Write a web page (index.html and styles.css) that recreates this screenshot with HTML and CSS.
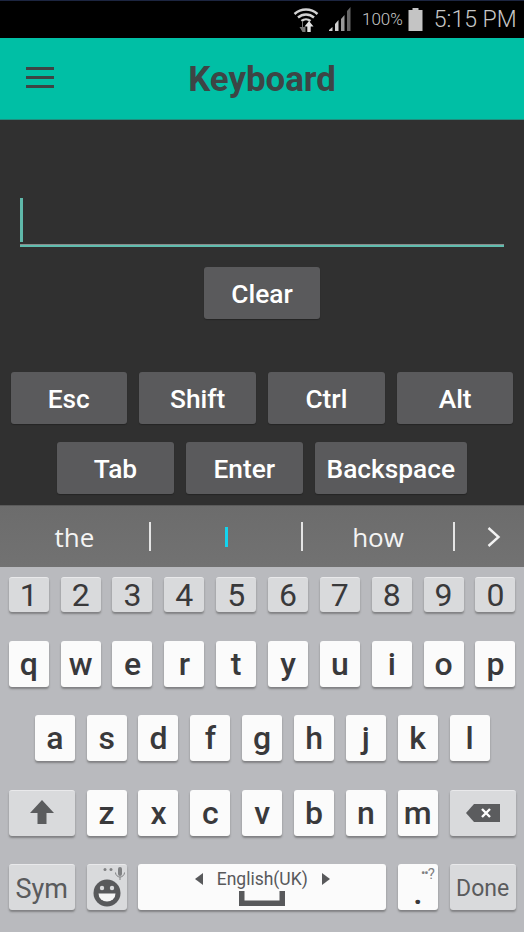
FILE: index.html
```html
<!DOCTYPE html>
<html lang="en">
<head>
<meta charset="utf-8">
<title>Keyboard</title>
<link rel="stylesheet" href="styles.css">
</head>
<body>
<div class="screen">
  <header class="status">
    <svg class="ic-wifi" width="26" height="26" viewBox="0 0 26 26">
      <path d="M1.500 8 A17 17 0 0 1 24.500 8 M5 11.500 A12 12 0 0 1 21 11.500 M8.500 15 A7 7 0 0 1 17.500 15" fill="none" stroke="#d2d2d2" stroke-width="2.400"/>
      <path d="M12.500 26v-5h-2.500V15h-1v6H6.500l3 5z" fill="#777"/>
      <path d="M16 15l4.500 5.500h-2.800V26h-3.400v-5.500h-2.800z" fill="#e4e4e4"/>
    </svg>
    <svg class="ic-signal" width="25" height="24" viewBox="0 0 25 24">
      <path d="M1 24h3.500v-4L1 23z" fill="#d0d0d0"/>
      <path d="M7 24h3.500V13L7 17z" fill="#d0d0d0"/>
      <path d="M13 24h3.500V8L13 12z" fill="#9a9a9a"/>
      <path d="M19 24h3.500V0L19 4z" fill="#666"/>
    </svg>
    <span class="pct">100%</span>
    <svg class="ic-batt" width="15" height="24" viewBox="0 0 15 24">
      <path d="M4.500 1h6v2h4v21H0.500V3h4z" fill="#c4c4c4"/>
    </svg>
    <span class="clock">5:15 PM</span>
  </header>

  <nav class="appbar">
    <div class="burger"><i></i><i></i><i></i></div>
    <h1 class="title">Keyboard</h1>
    <div></div>
  </nav>

  <main class="content">
    <div class="field"><div class="caret"></div><div class="line"></div></div>
    <div class="btn-row clear-row"><button class="btn">Clear</button></div>
    <div class="btn-row row-one">
      <button class="btn">Esc</button>
      <button class="btn">Shift</button>
      <button class="btn">Ctrl</button>
      <button class="btn">Alt</button>
    </div>
    <div class="btn-row row-two">
      <button class="btn">Tab</button>
      <button class="btn">Enter</button>
      <button class="btn btn-wide">Backspace</button>
    </div>
  </main>

  <section class="suggest">
    <div class="sug">the</div>
    <div class="sep"></div>
    <div class="sug"><span class="sug-caret"></span></div>
    <div class="sep"></div>
    <div class="sug">how</div>
    <div class="sep"></div>
    <div class="sug-more">
      <svg width="16" height="22" viewBox="0 0 16 22"><path d="M2.500 2l10 9-10 9" fill="none" stroke="#f2f2f2" stroke-width="2.400"/></svg>
    </div>
  </section>

  <section class="kbd">
    <div class="row">
      <div class="key num">1</div><div class="key num">2</div><div class="key num">3</div><div class="key num">4</div><div class="key num">5</div><div class="key num">6</div><div class="key num">7</div><div class="key num">8</div><div class="key num">9</div><div class="key num">0</div>
    </div>
    <div class="row">
      <div class="key">q</div><div class="key">w</div><div class="key">e</div><div class="key">r</div><div class="key">t</div><div class="key">y</div><div class="key">u</div><div class="key">i</div><div class="key">o</div><div class="key">p</div>
    </div>
    <div class="row row-mid">
      <div class="key">a</div><div class="key">s</div><div class="key">d</div><div class="key">f</div><div class="key">g</div><div class="key">h</div><div class="key">j</div><div class="key">k</div><div class="key">l</div>
    </div>
    <div class="row">
      <div class="key mod wide">
        <svg width="26" height="28" viewBox="0 0 26 28"><path d="M13 1L25 14h-7.500v11h-9V14H1z" fill="#5b5c5e"/></svg>
      </div>
      <div class="key">z</div><div class="key">x</div><div class="key">c</div><div class="key">v</div><div class="key">b</div><div class="key">n</div><div class="key">m</div>
      <div class="key mod wide">
        <svg width="36" height="20" viewBox="0 0 36 20"><path d="M9 1h26v18H9L1 10z" fill="#5b5c5e"/><path d="M17 6l8 8M25 6l-8 8" stroke="#fff" stroke-width="2.400"/></svg>
      </div>
    </div>
    <div class="row">
      <div class="key mod wide label sym">Sym</div>
      <div class="key mod">
        <svg width="40" height="46" viewBox="0 0 40 46">
          <circle cx="20" cy="28" r="13.500" fill="#58595b"/>
          <circle cx="15" cy="23" r="2.200" fill="#d9dadc"/>
          <circle cx="25" cy="23" r="2.200" fill="#d9dadc"/>
          <path d="M11.500 28.500h17a8.500 8 0 0 1-17 0z" fill="#f6f6f6"/>
          <circle cx="18" cy="4.500" r="1.500" fill="#808183"/>
          <circle cx="24" cy="4.500" r="1.500" fill="#808183"/>
          <rect x="31" y="2" width="4" height="9" rx="2" fill="#808183"/>
          <path d="M28.500 7.500a4.500 4.500 0 0 0 9 0M33 12v3" fill="none" stroke="#808183" stroke-width="1"/>
        </svg>
      </div>
      <div class="key space">
        <div class="lang">
          <svg width="9" height="12" viewBox="0 0 9 12"><path d="M8 0v12L0 6z" fill="#58595b"/></svg>
          <span>English(UK)</span>
          <svg width="9" height="12" viewBox="0 0 9 12"><path d="M1 0v12l8-6z" fill="#58595b"/></svg>
        </div>
        <svg class="bar" width="46" height="15" viewBox="0 0 46 15"><path d="M0 0h5.500v9.500h35V0H46v15H0z" fill="#58595b"/></svg>
      </div>
      <div class="key punct"><span class="hint"><span class="hint-dots">••</span>?</span><span class="dot">.</span></div>
      <div class="key mod wide label done">Done</div>
    </div>
  </section>
</div>
</body>
</html>
```
FILE: styles.css
```css
* { box-sizing: border-box; }
html, body { margin: 0; padding: 0; }
body { width: 524px; height: 932px; overflow: hidden; font-family: Roboto, sans-serif; background: #303030; }
.screen { width: 524px; height: 932px; display: flex; flex-direction: column; }

/* status bar */
.status { height: 38px; background: #000; border-top: 1px solid #1c2540; display: flex; align-items: center; color: #c8c8c8; padding-left: 293px; }
.ic-wifi { margin-top: -1px; }
.ic-signal { margin-left: 9px; margin-top: -1px; }
.pct { font-size: 17px; font-weight: 300; margin-left: 9px; margin-top: -1px; }
.ic-batt { margin-left: 5px; margin-top: -1px; }
.clock { font-size: 23px; font-weight: 300; margin-left: 11px; margin-top: -1px; }

/* app bar */
.appbar { height: 82px; background: #00bfa5; border-bottom: 1px solid #1f8f7f; display: grid; grid-template-columns: 1fr auto 1fr; align-items: center; color: #3d4545; }
.burger { margin-left: 26px; width: 28px; display: flex; flex-direction: column; gap: 6.500px; margin-top: -2px; }
.burger i { display: block; height: 2.500px; background: #3d4545; }
.title { margin: 0; font-size: 34.800px; font-weight: 700; }

/* content */
.content { height: 385px; background: #303030; display: flex; flex-direction: column; }
.field { margin: 78px 20px 0 20px; height: 49px; }
.caret { width: 2.500px; height: 44px; background: #5fb8aa; }
.line { height: 2px; margin-top: 3px; background: #5fbcae; box-shadow: 0 -1px 0 #8a8a8a; }
.btn-row { display: flex; justify-content: center; }
.clear-row { margin-top: 20px; }
.row-one { margin-top: 53px; gap: 12.300px; }
.row-two { margin-top: 18px; gap: 12.300px; }
.btn { width: 116.500px; height: 52px; border: 0; border-radius: 3px; background: #5a5a5c; color: #fff; font: 500 26.300px Roboto, sans-serif; padding: 2px 0 0; box-shadow: 0 1px 1px rgba(0,0,0,.25); }
.btn-wide { width: 152px; }

/* suggestions */
.suggest { height: 62px; background: linear-gradient(#6c6c6c, #727272); display: flex; align-items: center; border-top: 1px solid #5a5a5a; }
.sug { width: 150px; color: #f4f4f4; font: 400 26px "Open Sans", sans-serif; display: flex; justify-content: center; align-items: center; height: 40px; }
.sug:first-child { width: 149px; }
.sep { width: 2px; height: 29px; background: #e4e4e4; }
.sug-caret { width: 3px; height: 20px; background: #14d4ee; display: block; }
.sug-more { flex: 1; display: flex; justify-content: center; padding-left: 9px; }

/* keyboard */
.kbd { flex: 1; background: #b9babe; padding: 9.500px 0 0 8.800px; display: flex; flex-direction: column; gap: 28.500px; }
.row { display: flex; gap: 11.850px; }
.row-mid { padding-left: 26px; }
.key { width: 40px; height: 46px; flex: none; background: #fbfbfb; border-radius: 3px; box-shadow: 0 2px 2px rgba(60,60,60,.45); display: flex; align-items: center; justify-content: center; font: 500 32px Roboto, sans-serif; color: #39393b; }
.key.num { height: 35.500px; background: #d9dadc; border-top: 1px solid #e9e9eb; font-weight: 400; }
.key.mod { background: #d9dadc; border-top: 1px solid #e9e9eb; }
.key.wide { width: 66px; }
.label { font-weight: 400; color: #5a5b5d; padding-top: 2px; }
.sym { font-size: 27px; }
.done { font-size: 23px; }
.key svg { display: block; }
.space { width: 247.500px; flex-direction: column; justify-content: flex-start; padding-top: 4px; }
.lang { display: flex; align-items: center; gap: 13px; font-size: 17.500px; font-weight: 400; color: #58595b; height: 22px; }
.bar { margin-top: 1px; }
.punct { flex-direction: column; justify-content: flex-start; align-items: stretch; }
.hint { font-size: 15px; font-weight: 400; color: #808183; text-align: right; padding-right: 3px; line-height: 18px; }
.hint-dots { font-size: 13px; letter-spacing: -1px; vertical-align: 2px; }
.dot { font-size: 30px; font-weight: 700; line-height: 20px; margin-top: 1px; text-align: center; color: #39393b; }
```
